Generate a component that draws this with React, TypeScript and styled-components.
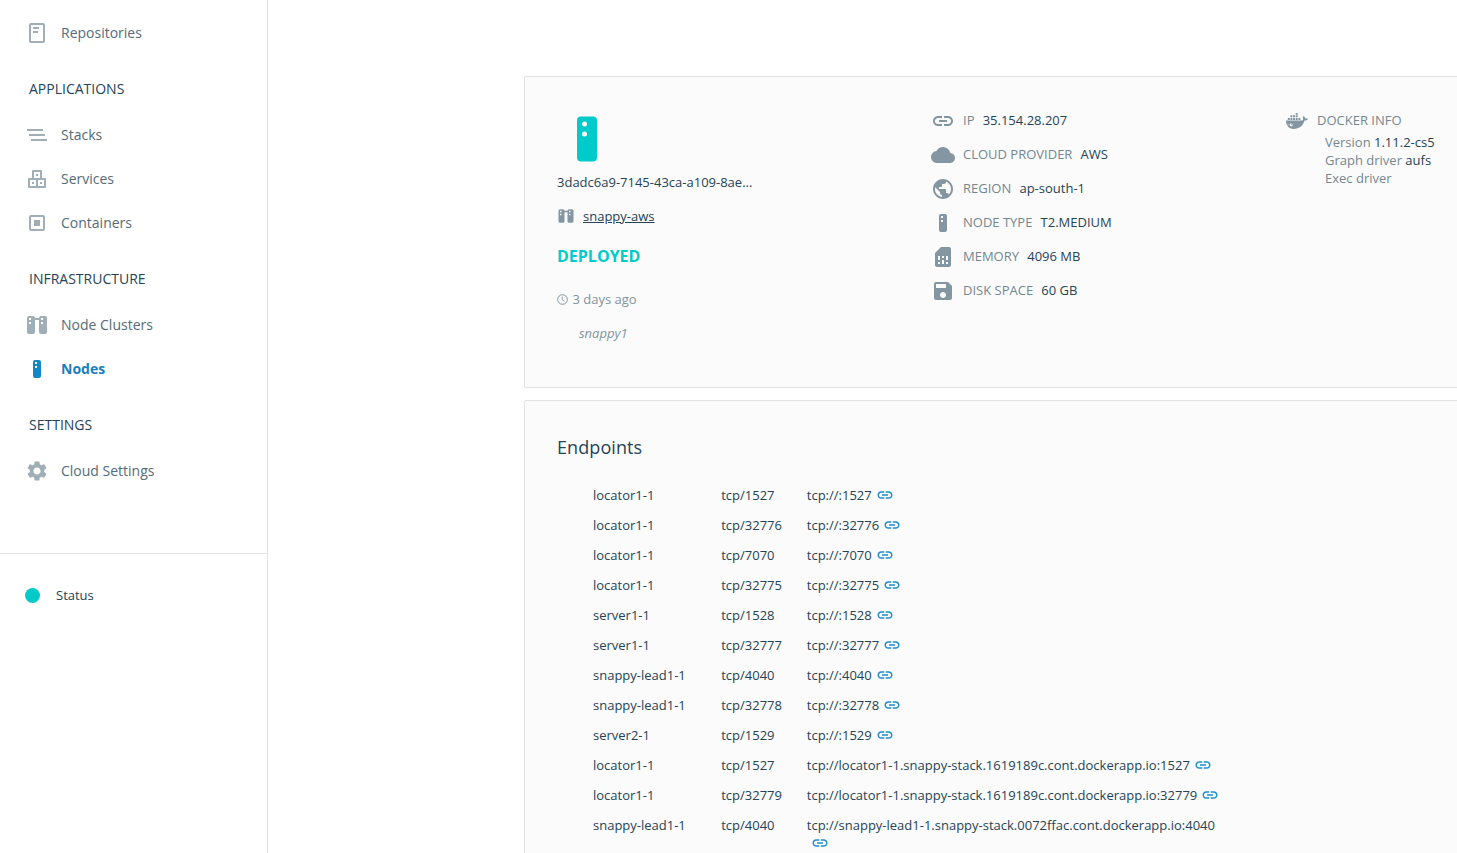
import React from "react";
import styled, { createGlobalStyle } from "styled-components";
import { MdCloud, MdLink, MdPublic, MdSave, MdSettings, MdSimCard } from "react-icons/md";

const GlobalStyle = createGlobalStyle`
  * { box-sizing: border-box; }
  body {
    margin: 0;
    background: #fff;
    color: #254356;
    font: 13px/18px "Open Sans", "Noto Sans", sans-serif;
  }
`;

const Page = styled.div`
  display: flex;
  height: 853px;
  overflow: hidden;
`;

const Sidebar = styled.aside`
  display: flex;
  flex-direction: column;
  flex: none;
  width: 268px;
  padding-top: 11px;
  border-right: 1px solid #e0e2e4;
`;

const Nav = styled.nav`
  height: 542px;
`;

const NavHeading = styled.h2`
  height: 58px;
  margin: 0;
  padding: 10px 0 0 29px;
  font-size: 14px;
  font-weight: 400;
  line-height: 48px;
  color: #254356;
  text-transform: uppercase;
`;

const NavItem = styled.a<{ $active?: boolean }>`
  display: flex;
  align-items: center;
  gap: 12px;
  height: 44px;
  padding-left: 25px;
  font-size: 14px;
  font-weight: ${(p) => (p.$active ? 700 : 400)};
  color: ${(p) => (p.$active ? "#1a7dbd" : "#556b78")};

  svg {
    flex: none;
    width: 24px;
    height: 24px;
    color: ${(p) => (p.$active ? "#1488c6" : "#a0afb7")};
  }
`;

const StatusRow = styled.div`
  display: flex;
  align-items: center;
  gap: 16px;
  padding: 32px 0 0 25px;
  border-top: 1px solid #e0e2e4;
`;

const StatusDot = styled.span`
  width: 15px;
  height: 15px;
  border-radius: 50%;
  background: #00cbca;
`;

const Main = styled.main`
  display: flex;
  flex-direction: column;
  gap: 12px;
  flex: none;
  width: 1300px;
  padding: 76px 0 0 256px;
`;

const Card = styled.section`
  flex: none;
  background: #fbfbfb;
  border: 1px solid #e0e2e4;
  border-radius: 2px;
`;

const SummaryCard = styled(Card)`
  display: grid;
  grid-template-columns: 374px 354px 1fr;
  height: 312px;
  padding: 26px 0 0 32px;
`;

const EndpointsCard = styled(Card)`
  height: 600px;
  padding: 34px 32px;
`;

const Identity = styled.div`
  display: flex;
  flex-direction: column;
  align-items: flex-start;
`;

const HeroIcon = styled.div`
  height: 46px;
  margin: 13px 0 0 20px;

  svg { display: block; }
`;

const NodeName = styled.div`
  margin-top: 11px;
`;

const ClusterRow = styled.div`
  display: flex;
  align-items: center;
  gap: 8px;
  margin-top: 16px;

  svg {
    width: 18px;
    height: 18px;
    color: #8496a1;
  }
`;

const ClusterLink = styled.a`
  text-decoration: underline;
`;

const State = styled.div`
  margin-top: 19px;
  font-size: 16px;
  font-weight: 700;
  line-height: 24px;
  color: #00cbca;
`;

const Age = styled.div`
  display: flex;
  align-items: center;
  gap: 4.5px;
  margin-top: 22px;
  color: #8194a0;
`;

const Tag = styled.div`
  margin: 16px 0 0 22px;
  font-style: italic;
  color: #8194a0;
`;

const FactList = styled.div`
  display: flex;
  flex-direction: column;
`;

const Fact = styled.div`
  display: flex;
  height: 34px;
  padding-top: 6px;

  svg {
    flex: none;
    width: 24px;
    height: 24px;
    margin-right: 8px;
    color: #8496a1;
  }
`;

const Label = styled.span`
  line-height: 22px;
  color: #748791;
`;

const Value = styled.span`
  margin-left: 8.2px;
  line-height: 22px;
`;

const DockerInfo = styled.div`
  display: flex;
  flex-direction: column;
`;

const DockerLine = styled.div`
  height: 18px;
  padding-left: 40px;
  line-height: 18px;
  color: #748791;

  &:nth-child(2) { margin-top: -4px; }

  b {
    font-weight: 400;
    color: #254356;
  }
`;

const Title = styled.h1`
  margin: 0 0 21px;
  font-size: 18px;
  font-weight: 400;
  line-height: 24px;
  letter-spacing: 0.08px;
`;

const Row = styled.div`
  display: grid;
  grid-template-columns: 128.2px 85.6px 425px;
  min-height: 30px;
  padding: 6px 0 6px 36px;
`;

const Url = styled.span`
  svg {
    width: 18px;
    height: 18px;
    margin-left: 4px;
    vertical-align: -4px;
    color: #1c8fcc;
  }
`;

const Svg = ({ children }: { children: React.ReactNode }) => (
  <svg viewBox="0 0 24 24" fill="currentColor">{children}</svg>
);

const RepositoryIcon = () => (
  <Svg>
    <rect x="5" y="3" width="14" height="18" rx="1" fill="none" stroke="currentColor" strokeWidth="2" />
    <path d="M8 6h6v2H8zM8 10h5v2H8z" />
  </Svg>
);

const StacksIcon = () => (
  <Svg><path d="M2 6h16v2H2zM4 11h16v2H4zM6 16h16v2H6z" /></Svg>
);

const ServicesIcon = () => (
  <Svg>
    <path fillRule="evenodd" d="M8 3h8a1 1 0 0 1 1 1v7h3a1 1 0 0 1 1 1v8a1 1 0 0 1-1 1H4a1 1 0 0 1-1-1v-8a1 1 0 0 1 1-1h3V4a1 1 0 0 1 1-1zM9 5v6h6V5zM5 13v6h6v-6zM13 13v6h6v-6z" />
    <path d="M11 7h2v2h-2zM7 15h2v2H7zM15 15h2v2h-2z" />
  </Svg>
);

const ContainerIcon = () => (
  <Svg>
    <rect x="5" y="5" width="14" height="14" rx="1" fill="none" stroke="currentColor" strokeWidth="2" />
    <path d="M9 9h6v6H9z" />
  </Svg>
);

const ClusterIcon = () => (
  <Svg>
    <path d="M9 5h6v2H9z" />
    <path fillRule="evenodd" d="M4 3h4a2 2 0 0 1 2 2v14a2 2 0 0 1-2 2H4a2 2 0 0 1-2-2V5a2 2 0 0 1 2-2zM4 5v2h2V5zM4 9v2h2V9zM16 3h4a2 2 0 0 1 2 2v14a2 2 0 0 1-2 2h-4a2 2 0 0 1-2-2V5a2 2 0 0 1 2-2zM16 5v2h2V5zM16 9v2h2V9z" />
  </Svg>
);

const NodeIcon = () => (
  <Svg>
    <path fillRule="evenodd" d="M10 3h4a2 2 0 0 1 2 2v14a2 2 0 0 1-2 2h-4a2 2 0 0 1-2-2V5a2 2 0 0 1 2-2zM10 5v2h2V5zM10 9v2h2V9z" />
  </Svg>
);

const WhaleIcon = () => (
  <Svg>
    <path d="M10.7 4h2v1.8h-2zM5.4 6.3h2v2h-2zM8 6.3h2v2H8zM10.7 6.3h2v2h-2zM2.8 9h2v2h-2zM5.4 9h2v2h-2zM8 9h2v2H8zM10.7 9h2v2h-2zM13.4 9h2v2h-2z" />
    <path fillRule="evenodd" d="M1 11.6h15c1.4 0 2-.5 2.2-1.2-.6-1-.5-2.4.4-3.4 1 .6 1.5 1.5 1.5 2.3.8-.2 1.9 0 2.8.4-.6 1.4-1.7 1.9-3.3 1.9C18 16.8 14.4 20 8.6 20 3.6 20 1 16.6 1 11.6zM6.3 14.5a1.4 1.4 0 1 0 0 2.8 1.4 1.4 0 0 0 0-2.8z" />
    <circle cx="6.7" cy="15.6" r=".6" />
    <path d="M2 15.8q3 0 4-.5" fill="none" stroke="#fbfbfb" strokeWidth=".4" />
  </Svg>
);

const HeroNode = () => (
  <svg width="20" height="46" viewBox="0 0 20 46">
    <rect y=".4" width="20" height="45" rx="4" fill="#00cbca" />
    <circle cx="7.5" cy="8" r="2.5" fill="#fff" />
    <circle cx="7.5" cy="18" r="2.5" fill="#fff" />
  </svg>
);

const ClockIcon = () => (
  <svg width="11" height="11" viewBox="0 0 11 11" fill="none" stroke="#8194a0">
    <circle cx="5.5" cy="5.5" r="4.8" />
    <path d="M5.2 2.5v3.2l2.2 1.5" strokeWidth=".9" />
  </svg>
);

const facts = [
  { icon: <MdLink />, label: "IP", value: "35.154.28.207" },
  { icon: <MdCloud />, label: "CLOUD PROVIDER", value: "AWS" },
  { icon: <MdPublic />, label: "REGION", value: "ap-south-1" },
  { icon: <NodeIcon />, label: "NODE TYPE", value: "T2.MEDIUM" },
  { icon: <MdSimCard />, label: "MEMORY", value: "4096 MB" },
  { icon: <MdSave />, label: "DISK SPACE", value: "60 GB" },
];

const endpoints = [
  ["locator1-1", "tcp/1527", "tcp://:1527"],
  ["locator1-1", "tcp/32776", "tcp://:32776"],
  ["locator1-1", "tcp/7070", "tcp://:7070"],
  ["locator1-1", "tcp/32775", "tcp://:32775"],
  ["server1-1", "tcp/1528", "tcp://:1528"],
  ["server1-1", "tcp/32777", "tcp://:32777"],
  ["snappy-lead1-1", "tcp/4040", "tcp://:4040"],
  ["snappy-lead1-1", "tcp/32778", "tcp://:32778"],
  ["server2-1", "tcp/1529", "tcp://:1529"],
  ["locator1-1", "tcp/1527", "tcp://locator1-1.snappy-stack.1619189c.cont.dockerapp.io:1527"],
  ["locator1-1", "tcp/32779", "tcp://locator1-1.snappy-stack.1619189c.cont.dockerapp.io:32779"],
  ["snappy-lead1-1", "tcp/4040", "tcp://snappy-lead1-1.snappy-stack.0072ffac.cont.dockerapp.io:4040"],
];

export default function App() {
  return (
    <>
      <GlobalStyle />
      <Page>
        <Sidebar>
          <Nav>
            <NavItem><RepositoryIcon />Repositories</NavItem>
            <NavHeading>Applications</NavHeading>
            <NavItem><StacksIcon />Stacks</NavItem>
            <NavItem><ServicesIcon />Services</NavItem>
            <NavItem><ContainerIcon />Containers</NavItem>
            <NavHeading>Infrastructure</NavHeading>
            <NavItem><ClusterIcon />Node Clusters</NavItem>
            <NavItem $active><NodeIcon />Nodes</NavItem>
            <NavHeading>Settings</NavHeading>
            <NavItem><MdSettings />Cloud Settings</NavItem>
          </Nav>
          <StatusRow><StatusDot />Status</StatusRow>
        </Sidebar>
        <Main>
          <SummaryCard>
            <Identity>
              <HeroIcon><HeroNode /></HeroIcon>
              <NodeName>3dadc6a9-7145-43ca-a109-8ae...</NodeName>
              <ClusterRow><ClusterIcon /><ClusterLink>snappy-aws</ClusterLink></ClusterRow>
              <State>DEPLOYED</State>
              <Age><ClockIcon />3 days ago</Age>
              <Tag>snappy1</Tag>
            </Identity>
            <FactList>
              {facts.map((f) => (
                <Fact key={f.label}>{f.icon}<Label>{f.label}</Label><Value>{f.value}</Value></Fact>
              ))}
            </FactList>
            <DockerInfo>
              <Fact><WhaleIcon /><Label>DOCKER INFO</Label></Fact>
              <DockerLine>Version <b>1.11.2-cs5</b></DockerLine>
              <DockerLine>Graph driver <b>aufs</b></DockerLine>
              <DockerLine>Exec driver</DockerLine>
            </DockerInfo>
          </SummaryCard>
          <EndpointsCard>
            <Title>Endpoints</Title>
            {endpoints.map(([service, port, url], i) => (
              <Row key={i}>
                <span>{service}</span>
                <span>{port}</span>
                <Url>{url}<wbr /><MdLink /></Url>
              </Row>
            ))}
          </EndpointsCard>
        </Main>
      </Page>
    </>
  );
}
